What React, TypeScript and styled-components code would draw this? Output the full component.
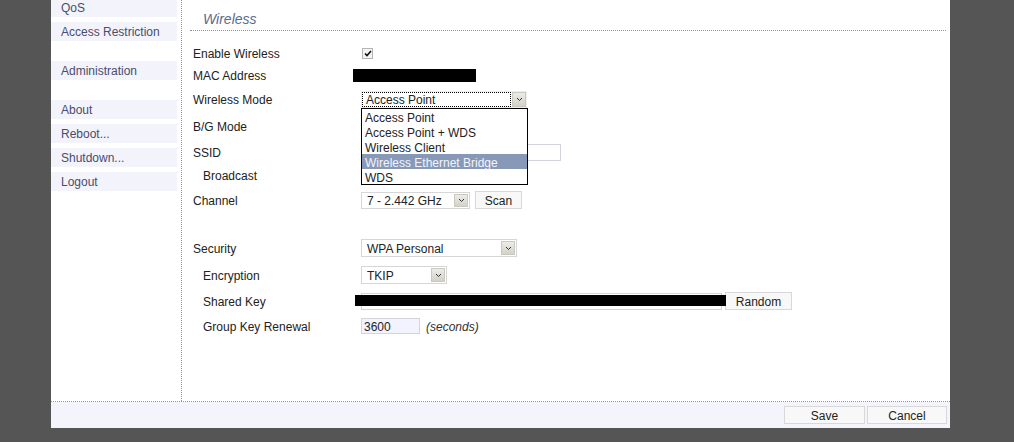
import React from "react";
import styled, { createGlobalStyle } from "styled-components";

const Global = createGlobalStyle`
  html, body { margin: 0; padding: 0; background: #555555; }
  body { font-family: "Liberation Sans", Arial, sans-serif; font-size: 12px; color: #222; }
`;

const Page = styled.div`
  width: 1014px;
  height: 442px;
  overflow: hidden;
  background: #555555;
`;

const Panel = styled.div`
  margin-left: 51px;
  width: 899px;
  height: 428px;
  background: #ffffff;
  display: flex;
  flex-direction: column;
`;

const Body = styled.div`
  display: flex;
  height: 402px;
  box-sizing: border-box;
  border-bottom: 1px dotted #7d9cad;
`;

const Sidebar = styled.nav`
  width: 131px;
  box-sizing: border-box;
  border-right: 1px dotted #7d9cad;
  display: flex;
  flex-direction: column;
  overflow: hidden;
`;

const NavList = styled.div`
  display: flex;
  flex-direction: column;
  margin-top: -2px;
`;

const NavItem = styled.div<{ $extraGap?: boolean }>`
  width: 126px;
  height: 19px;
  line-height: 21px;
  overflow: hidden;
  box-sizing: border-box;
  padding-left: 10px;
  background: #f3f3fb;
  color: #4b4b6e;
  margin-bottom: ${(p) => (p.$extraGap ? 20 : 5)}px;
  white-space: nowrap;
`;

const Content = styled.main`
  flex: 1;
  display: flex;
  flex-direction: column;
`;

const Header = styled.div`
  margin: 0 4px 0 8px;
  height: 31px;
  box-sizing: border-box;
  padding: 11px 0 0 13px;
  border-bottom: 1px dotted #7d9cad;
  font-size: 14px;
  line-height: 16px;
  font-style: italic;
  color: #5b6b8c;
`;

const Form = styled.div`
  display: flex;
  flex-direction: column;
  padding: 11px 0 0 11px;
`;

const Row = styled.div<{ $h: number }>`
  display: flex;
  align-items: center;
  height: ${(p) => p.$h}px;
`;

const Label = styled.div<{ $indent?: boolean }>`
  width: 168px;
  box-sizing: border-box;
  padding-left: ${(p) => (p.$indent ? 10 : 0)}px;
  padding-top: 2px;
  white-space: nowrap;
`;

const Control = styled.div`
  position: relative;
  display: flex;
  align-items: center;
`;

const SelectBox = styled.div<{ $w: number; $h?: number; $plain?: boolean }>`
  display: flex;
  align-items: stretch;
  box-sizing: border-box;
  width: ${(p) => p.$w}px;
  height: ${(p) => p.$h ?? 18}px;
  border: 1px solid ${(p) => (p.$plain ? "#ededed" : "#d6d6d6")};
  background: #fff;
  padding: ${(p) => (p.$plain ? 0 : 1)}px;
`;

const SelectText = styled.span<{ $focus?: boolean }>`
  flex: 1;
  display: flex;
  align-items: center;
  padding: 1px 0 0 3px;
  box-sizing: border-box;
  border: 1px ${(p) => (p.$focus ? "dotted #000" : "solid transparent")};
  margin-right: ${(p) => (p.$focus ? 1 : 0)}px;
  white-space: nowrap;
`;

const ArrowBox = styled.span`
  width: 14px;
  box-sizing: border-box;
  border: 1px solid #c9c9c0;
  background: linear-gradient(#ecece6, #d2d2ca);
  display: flex;
  align-items: center;
  justify-content: center;
`;

const DropList = styled.div`
  position: absolute;
  top: 100%;
  left: 0;
  width: 167px;
  box-sizing: border-box;
  border: 1px solid #000;
  background: #fff;
  z-index: 5;
`;

const Option = styled.div<{ $active?: boolean }>`
  height: 15px;
  box-sizing: border-box;
  padding: 3px 0 0 3px;
  line-height: 13px;
  background: ${(p) => (p.$active ? "#8799b6" : "#fff")};
  color: ${(p) => (p.$active ? "#f2f4ff" : "#222")};
  white-space: nowrap;
`;

const Check = styled.span`
  width: 11px;
  height: 11px;
  margin-left: 1px;
  box-sizing: border-box;
  border: 1px solid #b5b5b5;
  background: #f4f4f4;
  display: flex;
  align-items: center;
  justify-content: center;
`;

const Redact = styled.div<{ $w: number; $h: number }>`
  width: ${(p) => p.$w}px;
  height: ${(p) => p.$h}px;
  background: #000;
`;

const RedactOver = styled(Redact)`
  position: absolute;
  left: -6px;
  top: 3px;
  z-index: 2;
`;

const TextInput = styled.div<{ $w: number; $h?: number; $tint?: boolean }>`
  width: ${(p) => p.$w}px;
  height: ${(p) => p.$h ?? 17}px;
  box-sizing: border-box;
  border: 1px solid #d4d4dc;
  background: ${(p) => (p.$tint ? "#f3f3ff" : "#fff")};
  padding: 2px 0 0 2px;
  display: flex;
  align-items: center;
`;

const Button = styled.div<{ $w: number; $ml?: number }>`
  width: ${(p) => p.$w}px;
  height: 18px;
  margin-left: ${(p) => p.$ml ?? 0}px;
  box-sizing: border-box;
  border: 1px solid #d8d8d8;
  background: #f8f8f8;
  padding-top: 2px;
  display: flex;
  align-items: center;
  justify-content: center;
  color: #222;
`;

const Note = styled.span`
  margin-left: 6px;
  padding-top: 2px;
  font-style: italic;
  color: #333;
`;

const Footer = styled.div`
  height: 26px;
  background: #f4f4fc;
  display: flex;
  align-items: center;
  justify-content: flex-end;
  gap: 2px;
  padding-right: 3px;
`;

const Chevron = () => (
  <svg width="7" height="5" viewBox="0 0 7 5">
    <polyline points="1,1 3.5,3.5 6,1" fill="none" stroke="#333" strokeWidth="1" />
  </svg>
);

const Select = ({ w, h, text, focus, plain }: { w: number; h?: number; text: string; focus?: boolean; plain?: boolean }) => (
  <SelectBox $w={w} $h={h} $plain={plain}>
    <SelectText $focus={focus}>{text}</SelectText>
    <ArrowBox>
      <Chevron />
    </ArrowBox>
  </SelectBox>
);

const modes = ["Access Point", "Access Point + WDS", "Wireless Client", "Wireless Ethernet Bridge", "WDS"];

export default function App() {
  return (
    <Page>
      <Global />
      <Panel>
        <Body>
          <Sidebar>
            <NavList>
              <NavItem>QoS</NavItem>
              <NavItem $extraGap>Access Restriction</NavItem>
              <NavItem $extraGap>Administration</NavItem>
              <NavItem>About</NavItem>
              <NavItem>Reboot...</NavItem>
              <NavItem>Shutdown...</NavItem>
              <NavItem>Logout</NavItem>
            </NavList>
          </Sidebar>
          <Content>
            <Header>Wireless</Header>
            <Form>
              <Row $h={22}>
                <Label>Enable Wireless</Label>
                <Control>
                  <Check>
                    <svg width="8" height="7" viewBox="0 0 8 7">
                      <polyline points="1,3.5 3,5.5 7,1" fill="none" stroke="#111" strokeWidth="1.6" />
                    </svg>
                  </Check>
                </Control>
              </Row>
              <Row $h={22}>
                <Label>MAC Address</Label>
                <Control style={{ marginLeft: -8 }}>
                  <Redact $w={123} $h={13} />
                </Control>
              </Row>
              <Row $h={26}>
                <Label>Wireless Mode</Label>
                <Control>
                  <Select w={166} h={17} text="Access Point" focus plain />
                  <DropList>
                    {modes.map((m) => (
                      <Option key={m} $active={m === "Wireless Ethernet Bridge"}>
                        {m}
                      </Option>
                    ))}
                  </DropList>
                </Control>
              </Row>
              <Row $h={28}>
                <Label>B/G Mode</Label>
              </Row>
              <Row $h={24}>
                <Label>SSID</Label>
                <Control>
                  <TextInput $w={200} />
                </Control>
              </Row>
              <Row $h={22}>
                <Label $indent>Broadcast</Label>
              </Row>
              <Row $h={28}>
                <Label>Channel</Label>
                <Control>
                  <Select w={109} h={17} text="7 - 2.442 GHz" />
                  <Button $w={47} $ml={5}>Scan</Button>
                </Control>
              </Row>
              <Row $h={22} />
              <Row $h={24}>
                <Label>Security</Label>
                <Control>
                  <Select w={156} text="WPA Personal" />
                </Control>
              </Row>
              <Row $h={30}>
                <Label $indent>Encryption</Label>
                <Control>
                  <Select w={86} text="TKIP" />
                </Control>
              </Row>
              <Row $h={22}>
                <Label $indent>Shared Key</Label>
                <Control>
                  <TextInput $w={361} />
                  <RedactOver $w={371} $h={11} />
                  <Button $w={67} $ml={3}>Random</Button>
                </Control>
              </Row>
              <Row $h={28}>
                <Label $indent>Group Key Renewal</Label>
                <Control>
                  <TextInput $w={59} $h={16} $tint>3600</TextInput>
                  <Note>(seconds)</Note>
                </Control>
              </Row>
            </Form>
          </Content>
        </Body>
        <Footer>
          <Button $w={81}>Save</Button>
          <Button $w={80}>Cancel</Button>
        </Footer>
      </Panel>
    </Page>
  );
}
